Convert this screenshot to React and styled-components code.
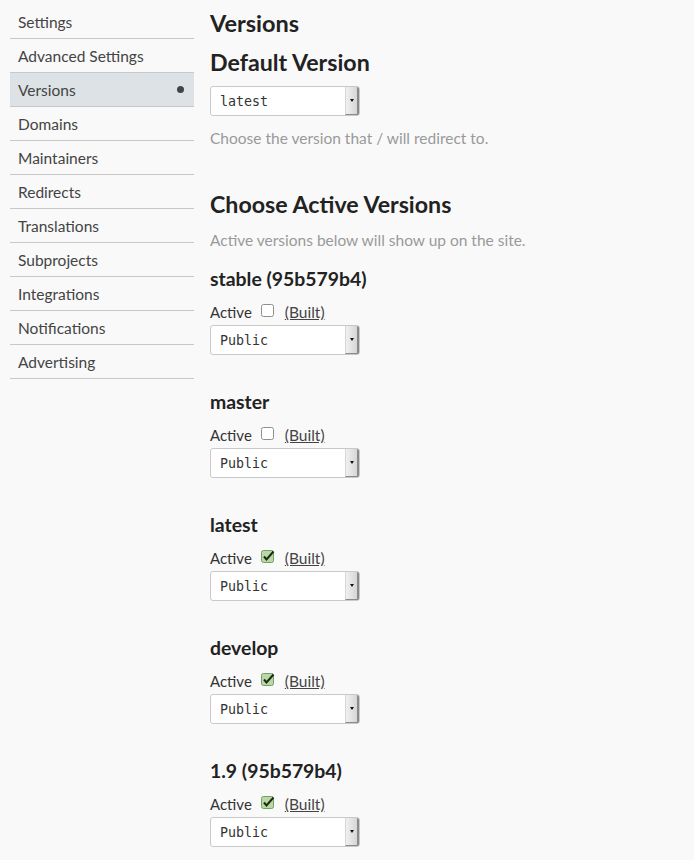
import React from "react";
import styled, { createGlobalStyle } from "styled-components";

const Global = createGlobalStyle`
  html, body { margin: 0; padding: 0; background: #f9f9f9; }
  body { font-family: Lato, "Open Sans", sans-serif; color: #333; }
`;

const Page = styled.div`
  display: flex;
  padding: 5px 0 0 10px;
  gap: 16px;
  width: 694px;
  box-sizing: border-box;
`;

const Sidebar = styled.nav`
  width: 184px;
  flex: none;
  display: flex;
  flex-direction: column;
`;

const NavItem = styled.div`
  height: 33px;
  border-bottom: 1px solid #c8c8c8;
  display: flex;
  align-items: center;
  justify-content: space-between;
  padding: 0 10px 0 8px;
  font-size: 15.5px;
  color: #444;
  background: ${(p) => (p.$active ? "#dce2e5" : "transparent")};
`;

const Dot = styled.span`
  width: 7px;
  height: 7px;
  border-radius: 50%;
  background: #444;
`;

const Main = styled.main`
  display: flex;
  flex-direction: column;
  align-items: flex-start;
  padding-top: 3px;
`;

const Title = styled.h1`
  margin: 0 0 9px;
  font-size: 23.5px;
  line-height: 30px;
  font-weight: 700;
  color: #222;
`;

const SubTitle = styled.h2`
  margin: ${(p) => p.$mt || 0}px 0 ${(p) => p.$mb || 0}px;
  font-size: 23.2px;
  line-height: 30px;
  font-weight: 700;
  color: #222;
`;

const Help = styled.p`
  margin: ${(p) => p.$mt || 0}px 0 0;
  font-size: 15.5px;
  line-height: 20px;
  color: #999;
`;

const FakeSelect = styled.div`
  width: 150px;
  height: 30px;
  box-sizing: border-box;
  border: 1px solid #c9c9c9;
  border-radius: 3px;
  background: #fff;
  display: flex;
  align-items: stretch;
  margin-top: ${(p) => p.$mt || 0}px;
  overflow: hidden;
`;

const SelectText = styled.span`
  flex: 1;
  display: flex;
  align-items: center;
  padding-left: 9px;
  font-family: "DejaVu Sans Mono", monospace;
  font-size: 13.3px;
  color: #333;
`;

const ArrowBtn = styled.span`
  width: 11px;
  display: flex;
  align-items: center;
  justify-content: center;
  background: linear-gradient(to right, #f0f0f0, #d6d6d6);
  border-left: 1px solid #d8d8d8;
  border-right: 2px solid #8a8a8a;
  border-bottom: 1px solid #8a8a8a;
  &::after {
    content: "";
    border-left: 2.5px solid transparent;
    border-right: 2.5px solid transparent;
    border-top: 3px solid #111;
  }
`;

const VersionBlock = styled.section`
  margin-top: ${(p) => p.$mt}px;
  display: flex;
  flex-direction: column;
  align-items: flex-start;
`;

const VersionTitle = styled.h3`
  margin: 0;
  font-size: 19.4px;
  line-height: 26px;
  font-weight: 700;
  color: #222;
`;

const ActiveRow = styled.div`
  margin-top: 10px;
  display: flex;
  align-items: center;
  gap: 9px;
  font-size: 15px;
  line-height: 20px;
  color: #333;
`;

const Built = styled.a`
  color: #444;
  font-size: 15.5px;
  text-decoration: underline;
  margin-left: 1px;
`;

const Box = styled.svg`
  width: 14px;
  height: 14px;
  margin-top: -3px;
`;

function Checkbox({ checked }) {
  return (
    <Box viewBox="0 0 14 14">
      <rect
        x="0.5"
        y="0.5"
        width="12"
        height="12"
        rx="2"
        fill={checked ? "#b8d9a4" : "#fff"}
        stroke={checked ? "#7a9a6a" : "#8f8f8f"}
      />
      {checked && (
        <path d="M3 6.5 L5.5 9.5 L12.5 1.5" fill="none" stroke="#1e2a18" strokeWidth="2" />
      )}
    </Box>
  );
}

function Select({ value, mt }) {
  return (
    <FakeSelect $mt={mt}>
      <SelectText>{value}</SelectText>
      <ArrowBtn />
    </FakeSelect>
  );
}

const nav = [
  "Settings",
  "Advanced Settings",
  "Versions",
  "Domains",
  "Maintainers",
  "Redirects",
  "Translations",
  "Subprojects",
  "Integrations",
  "Notifications",
  "Advertising",
];

const versions = [
  { name: "stable (95b579b4)", active: false },
  { name: "master", active: false },
  { name: "latest", active: true },
  { name: "develop", active: true },
  { name: "1.9 (95b579b4)", active: true },
];

export default function App() {
  return (
    <>
      <Global />
      <Page>
        <Sidebar>
          {nav.map((n) => (
            <NavItem key={n} $active={n === "Versions"}>
              {n}
              {n === "Versions" && <Dot />}
            </NavItem>
          ))}
        </Sidebar>
        <Main>
          <Title>Versions</Title>
          <SubTitle $mb={9}>Default Version</SubTitle>
          <Select value="latest" />
          <Help $mt={12}>Choose the version that / will redirect to.</Help>
          <SubTitle $mt={41}>Choose Active Versions</SubTitle>
          <Help $mt={11}>Active versions below will show up on the site.</Help>
          {versions.map((v, i) => (
            <VersionBlock key={v.name} $mt={i === 0 ? 16 : 34}>
              <VersionTitle>{v.name}</VersionTitle>
              <ActiveRow>
                Active
                <Checkbox checked={v.active} />
                <Built>(Built)</Built>
              </ActiveRow>
              <Select value="Public" mt={3} />
            </VersionBlock>
          ))}
        </Main>
      </Page>
    </>
  );
}
